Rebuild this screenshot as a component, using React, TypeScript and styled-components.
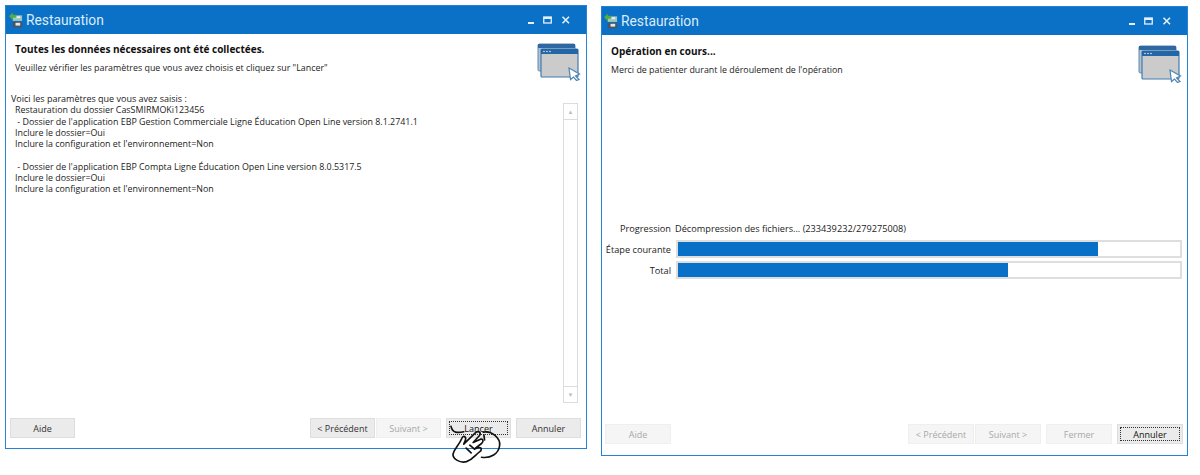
import styled, { createGlobalStyle } from 'styled-components';

const GlobalStyle = createGlobalStyle`
  html, body {
    margin: 0;
    padding: 0;
    background: #ffffff;
  }
  body {
    font-family: 'Open Sans', 'Noto Sans', 'Liberation Sans', sans-serif;
    font-size: 9px;
    color: #222;
  }
`;

const StyledPage = styled.div`
  width: 1200px;
  height: 475px;
  overflow: hidden;
  position: relative;
  display: flex;
  align-items: flex-start;
  gap: 14px;
  padding: 5px 0 0 5px;
  box-sizing: border-box;
`;

const StyledWindow = styled.div<{ $width: number; $height: number; $offset: number }>`
  width: ${(p) => p.$width}px;
  height: ${(p) => p.$height}px;
  margin-top: ${(p) => p.$offset}px;
  flex: none;
  box-sizing: border-box;
  display: flex;
  flex-direction: column;
  background: #fff;
  border: 1.5px solid #2583d6;
`;

const StyledTitleBar = styled.div<{ $padLeft: number }>`
  height: 28px;
  flex: none;
  display: flex;
  align-items: center;
  gap: 3px;
  padding: 0 14px 0 ${(p) => p.$padLeft}px;
  background: #0a71c6;
  color: #dcecf9;
  font-family: Roboto, 'Open Sans', sans-serif;
  font-size: 13.8px;
`;

const StyledTitle = styled.span`
  flex: 1;
`;

const StyledWindowControls = styled.div`
  display: flex;
  align-items: center;
  gap: 8px;
`;

const StyledHeader = styled.div<{ $top: number }>`
  height: 59px;
  flex: none;
  display: flex;
  justify-content: space-between;
  padding: ${(p) => p.$top}px 5px 0 9px;
  box-sizing: border-box;
`;

const StyledHeading = styled.div`
  font-weight: 700;
  font-size: 10px;
  color: #111;
  margin-bottom: 5px;
  line-height: 13px;
`;

const StyledSubHeading = styled.div`
  font-size: 8.9px;
  line-height: 13px;
`;

const StyledBody = styled.div`
  flex: 1;
  min-height: 0;
  display: flex;
`;

const StyledSummary = styled.div`
  flex: 1;
  padding: 0 0 0 5px;
  font-size: 9px;
  line-height: 11.3px;
`;

const StyledSummaryLines = styled.div`
  padding-left: 4px;
  font-size: 8.9px;
  white-space: pre;
`;

const StyledScrollbar = styled.div`
  width: 15px;
  margin: 10px 8px 15px 0;
  border: 1px solid #dcdcdc;
  box-sizing: border-box;
  display: flex;
  flex-direction: column;
  justify-content: space-between;
`;

const StyledScrollArrow = styled.div`
  height: 15px;
  display: flex;
  align-items: center;
  justify-content: center;
  color: #bbb;
  font-size: 6px;
  border-bottom: 1px solid #dcdcdc;
  &:last-child {
    border-bottom: 0;
    border-top: 1px solid #dcdcdc;
  }
`;

const StyledProgressArea = styled.div`
  flex: 1;
  padding: 125px 5px 0 3px;
  display: grid;
  grid-template-columns: 66px 1fr;
  grid-auto-rows: min-content;
  column-gap: 4px;
  row-gap: 3px;
  align-items: center;
`;

const StyledRowLabel = styled.div`
  text-align: right;
  font-size: 9.2px;
  white-space: nowrap;
`;

const StyledProgressText = styled.div`
  font-size: 9.2px;
  height: 18px;
  line-height: 20px;
`;

const StyledTrack = styled.div`
  height: 18px;
  box-sizing: border-box;
  border: 2px solid #dedede;
  background: #fff;
  margin-left: 1px;
`;

const StyledFill = styled.div`
  height: 100%;
  background: #0870c6;
`;

const StyledFooter = styled.div<{ $padLeft: number; $padRight: number; $bottom: number; $buttonWidth: number }>`
  flex: none;
  display: flex;
  align-items: center;
  padding: 0 ${(p) => p.$padRight}px ${(p) => p.$bottom}px ${(p) => p.$padLeft}px;
  --button-width: ${(p) => p.$buttonWidth}px;
`;

const StyledSpacer = styled.div`
  flex: 1;
`;

const StyledButton = styled.div<{ $disabled?: boolean; $focused?: boolean; $gap?: number }>`
  width: var(--button-width);
  height: 20px;
  box-sizing: border-box;
  margin-left: ${(p) => p.$gap ?? 0}px;
  display: flex;
  align-items: center;
  justify-content: center;
  font-size: 9px;
  background: ${(p) => (p.$disabled ? '#f5f5f5' : '#ebebeb')};
  color: ${(p) => (p.$disabled ? '#a8a8a8' : '#333')};
  border: 1px solid ${(p) => (p.$disabled ? '#efefef' : '#dedede')};
  ${(p) => p.$focused && 'outline: 1px dotted #333; outline-offset: -4px; color: #111;'}
`;

const StyledHandSlot = styled.div`
  position: absolute;
  left: 447px;
  top: 423px;
  width: 57px;
  height: 42px;
`;

function AppIcon() {
  return (
    <svg width="14" height="16" viewBox="0 0 15 16">
      <rect x="4" y="3" width="10" height="6" fill="#9cc4c0" />
      <rect x="6" y="4" width="6" height="2" fill="#e8f1f0" />
      <rect x="4" y="10" width="10" height="6" fill="#4a5560" />
      <rect x="7" y="11" width="5" height="3" fill="#e6e6e6" />
      <path d="M0 4 L4 0 V2.5 H8 V5.5 H4 V8 Z" fill="#4fae45" />
    </svg>
  );
}

function WindowControls() {
  return (
    <StyledWindowControls>
      <svg width="8" height="8" viewBox="0 0 8 8">
        <rect x="1" y="6" width="6" height="2" fill="#e4f0fa" />
      </svg>
      <svg width="9" height="8" viewBox="0 0 9 8">
        <rect x="0.75" y="1" width="7.5" height="6" fill="none" stroke="#e4f0fa" strokeWidth="1.3" />
        <rect x="0.5" y="1" width="8" height="2" fill="#e4f0fa" />
      </svg>
      <svg width="12" height="8" viewBox="0 0 12 8">
        <path d="M2.5 0.8 L9 7.2 M9 0.8 L2.5 7.2" stroke="#e4f0fa" strokeWidth="1.6" />
      </svg>
    </StyledWindowControls>
  );
}

function WizardIcon() {
  return (
    <svg width="44" height="38" viewBox="0 0 44 38">
      <rect x="1" y="1" width="37" height="27" rx="1.5" fill="#b5c0cc" stroke="#5e89b2" />
      <rect x="1" y="1" width="37" height="4" fill="#2f67a3" />
      <rect x="4" y="6" width="37" height="28" rx="1" fill="#cbcbcb" stroke="#3f7cb3" strokeWidth="1.2" />
      <rect x="4" y="6" width="37" height="5" fill="#2366a8" />
      <circle cx="7" cy="8.5" r="0.8" fill="#dce6f0" />
      <circle cx="10" cy="8.5" r="0.8" fill="#dce6f0" />
      <circle cx="13" cy="8.5" r="0.8" fill="#dce6f0" />
      <path d="M32 25 L42.5 31 L38.5 33 L42 36.5 L39.5 37.5 L36.5 34 L33.5 36.5 Z" fill="#fff" stroke="#4d86b5" strokeWidth="1.2" />
    </svg>
  );
}

function HandCursor() {
  return (
    <svg width="57" height="42" viewBox="440 130 170 125" fill="none" stroke="#111" strokeWidth="5" strokeLinecap="round" strokeLinejoin="round">
      <path d="M452 140 C456 160 472 160 490 156" />
      <path d="M548 157 C575 153 600 175 597 197 C594 222 570 236 543 232" />
      <path d="M458 222 C462 205 476 196 484 176 C488 165 498 170 495 181 L490 193 L526 158 C533 152 543 158 537 167 L518 188 L540 178 C548 176 550 186 543 191 L522 207 L536 203 C544 203 544 212 537 216 C525 224 518 238 498 245 C480 250 456 238 458 222 Z" />
      <path d="M497 205 L512 219 M508 196 L522 208" />
      <path d="M550 165 L552 180" />
    </svg>
  );
}

function TitleBar({ padLeft }: { padLeft: number }) {
  return (
    <StyledTitleBar $padLeft={padLeft}>
      <AppIcon />
      <StyledTitle>Restauration</StyledTitle>
      <WindowControls />
    </StyledTitleBar>
  );
}

export default function App() {
  return (
    <>
      <GlobalStyle />
      <StyledPage>
        <StyledWindow $width={582} $height={444} $offset={0}>
          <TitleBar padLeft={3} />
          <StyledHeader $top={9}>
            <div>
              <StyledHeading>Toutes les données nécessaires ont été collectées.</StyledHeading>
              <StyledSubHeading>Veuillez vérifier les paramètres que vous avez choisis et cliquez sur "Lancer"</StyledSubHeading>
            </div>
            <WizardIcon />
          </StyledHeader>
          <StyledBody>
            <StyledSummary>
              <div>Voici les paramètres que vous avez saisis :</div>
              <StyledSummaryLines>
                {`Restauration du dossier CasSMIRMOKi123456
 - Dossier de l'application EBP Gestion Commerciale Ligne Éducation Open Line version 8.1.2741.1
Inclure le dossier=Oui
Inclure la configuration et l'environnement=Non

 - Dossier de l'application EBP Compta Ligne Éducation Open Line version 8.0.5317.5
Inclure le dossier=Oui
Inclure la configuration et l'environnement=Non`}
              </StyledSummaryLines>
            </StyledSummary>
            <StyledScrollbar>
              <StyledScrollArrow>▲</StyledScrollArrow>
              <StyledScrollArrow>▼</StyledScrollArrow>
            </StyledScrollbar>
          </StyledBody>
          <StyledFooter $padLeft={4} $padRight={5} $bottom={10} $buttonWidth={65}>
            <StyledButton>Aide</StyledButton>
            <StyledSpacer />
            <StyledButton>&lt; Précédent</StyledButton>
            <StyledButton $disabled $gap={1}>Suivant &gt;</StyledButton>
            <StyledButton $focused $gap={5}>Lancer</StyledButton>
            <StyledButton $gap={5}>Annuler</StyledButton>
          </StyledFooter>
        </StyledWindow>
        <StyledWindow $width={587} $height={450} $offset={1}>
          <TitleBar padLeft={2} />
          <StyledHeader $top={10}>
            <div>
              <StyledHeading>Opération en cours...</StyledHeading>
              <StyledSubHeading>Merci de patienter durant le déroulement de l'opération</StyledSubHeading>
            </div>
            <WizardIcon />
          </StyledHeader>
          <StyledBody>
            <StyledProgressArea>
              <StyledRowLabel>Progression</StyledRowLabel>
              <StyledProgressText>Décompression des fichiers... (233439232/279275008)</StyledProgressText>
              <StyledRowLabel>Étape courante</StyledRowLabel>
              <StyledTrack>
                <StyledFill style={{ width: '83.6%' }} />
              </StyledTrack>
              <StyledRowLabel>Total</StyledRowLabel>
              <StyledTrack>
                <StyledFill style={{ width: '65.8%' }} />
              </StyledTrack>
            </StyledProgressArea>
          </StyledBody>
          <StyledFooter $padLeft={3} $padRight={4} $bottom={11} $buttonWidth={66}>
            <StyledButton $disabled>Aide</StyledButton>
            <StyledSpacer />
            <StyledButton $disabled>&lt; Précédent</StyledButton>
            <StyledButton $disabled $gap={1}>Suivant &gt;</StyledButton>
            <StyledButton $disabled $gap={5}>Fermer</StyledButton>
            <StyledButton $focused $gap={5}>Annuler</StyledButton>
          </StyledFooter>
        </StyledWindow>
        <StyledHandSlot>
          <HandCursor />
        </StyledHandSlot>
      </StyledPage>
    </>
  );
}
